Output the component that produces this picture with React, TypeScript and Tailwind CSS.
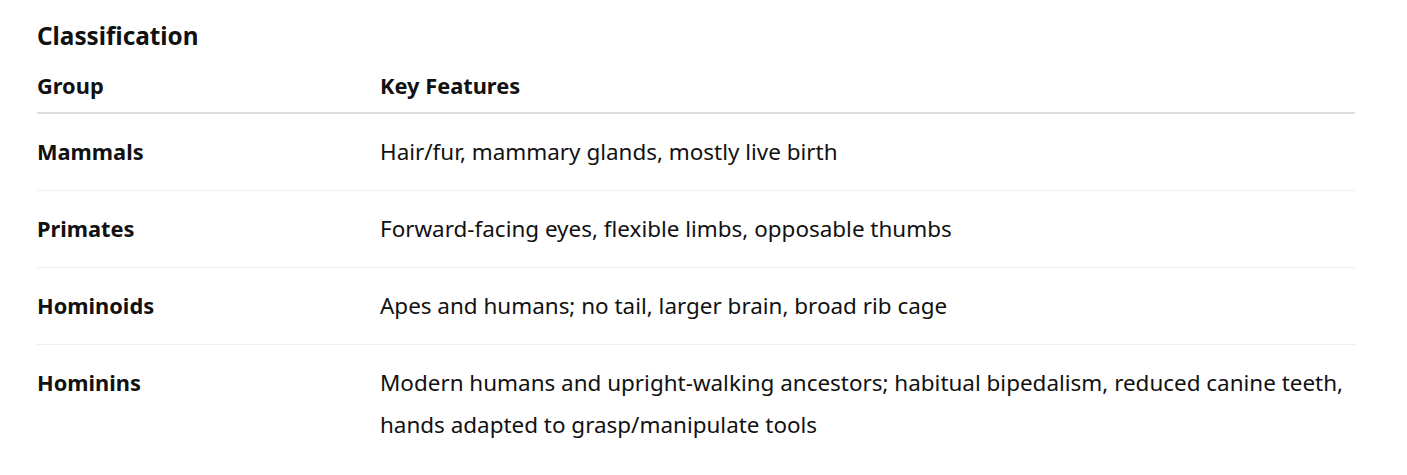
const rows = [
  { g: "Mammals", f: "Hair/fur, mammary glands, mostly live birth" },
  { g: "Primates", f: "Forward-facing eyes, flexible limbs, opposable thumbs" },
  { g: "Hominoids", f: "Apes and humans; no tail, larger brain, broad rib cage" },
  {
    g: "Hominins",
    f: "Modern humans and upright-walking ancestors; habitual bipedalism, reduced canine teeth, hands adapted to grasp/manipulate tools",
  },
];

export default function App() {
  return (
    <div
      className="bg-white text-[#111] pl-[37px] pr-[52px] pt-[19px]"
      style={{ fontFamily: '"Noto Sans", "Open Sans", sans-serif' }}
    >
      <h2 className="text-[24.3px] font-bold leading-[34px] mb-[18px]">Classification</h2>
      <table className="w-full border-collapse text-[21.8px]">
        <thead>
          <tr className="border-b-2 border-[#dedede]">
            <th className="w-[343px] text-left font-bold leading-[30px] pb-[11px] pr-4">Group</th>
            <th className="text-left font-bold leading-[30px] pb-[11px]">Key Features</th>
          </tr>
        </thead>
        <tbody>
          {rows.map((r, i) => (
            <tr key={r.g} className={i < rows.length - 1 ? "border-b border-[#efefef]" : ""}>
              <td className="align-top font-bold leading-[42px] py-[17px] pr-4">{r.g}</td>
              <td className="align-top text-[22.45px] leading-[42px] py-[17px]">{r.f}</td>
            </tr>
          ))}
        </tbody>
      </table>
    </div>
  );
}
